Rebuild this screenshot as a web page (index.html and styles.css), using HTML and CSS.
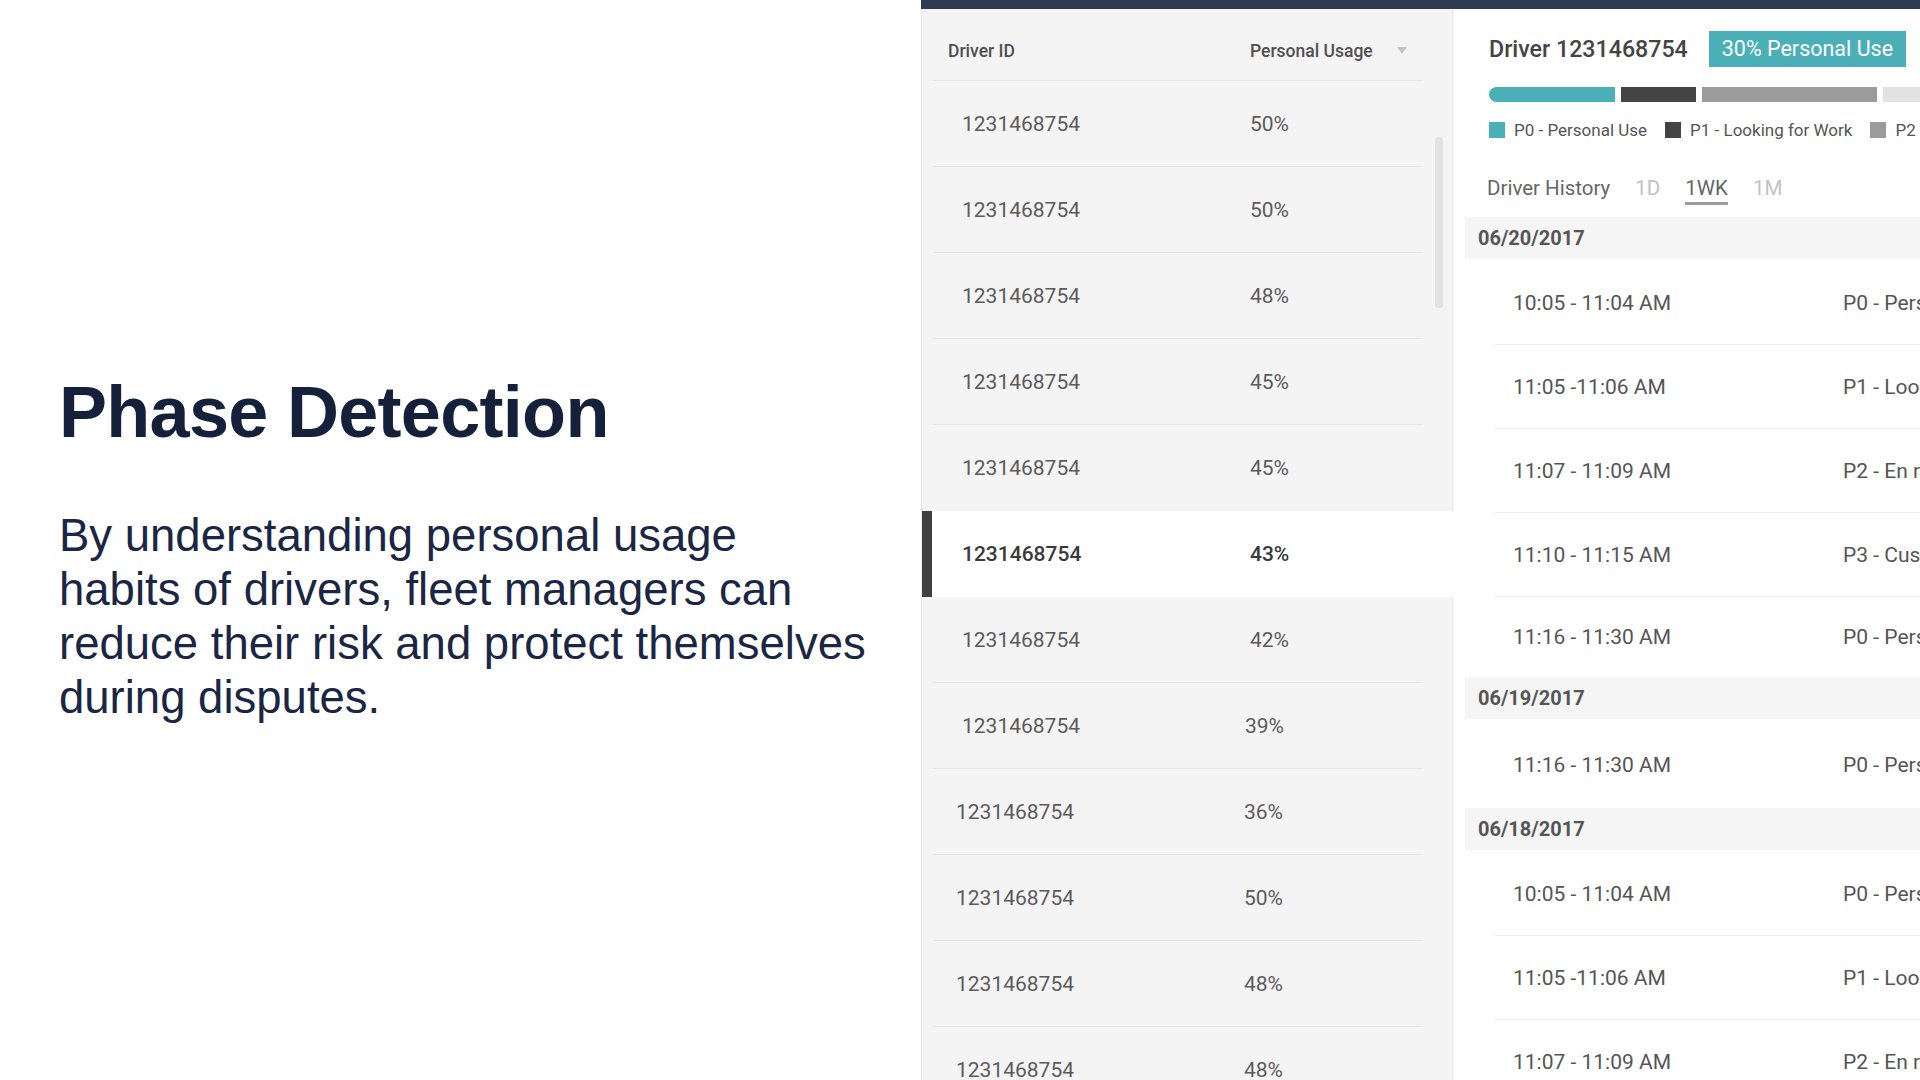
FILE: index.html
```html
<!DOCTYPE html>
<html lang="en">
<head>
<meta charset="utf-8">
<title>Phase Detection</title>
<link rel="stylesheet" href="styles.css">
</head>
<body>
<div class="page">
  <section class="intro">
    <h1 class="title">Phase Detection</h1>
    <p class="lead">By understanding personal usage<br>habits of drivers, fleet managers can<br>reduce their risk and protect themselves<br>during disputes.</p>
  </section>
  <section class="dash">
    <div class="topbar"></div>
    <div class="dash-body">
      <div class="list">
        <div class="list-head">
          <div class="list-head-in">
            <span class="head-id">Driver ID</span>
            <span class="head-pct">Personal Usage</span>
            <svg class="sort" width="10" height="7" viewBox="0 0 10 7"><path d="M0 0 L10 0 L5 7 Z" fill="#c4c4c4"/></svg>
          </div>
        </div>
        <div class="row"><div class="row-in"><span class="cell-id">1231468754</span><span class="cell-pct">50%</span></div></div>
        <div class="row"><div class="row-in"><span class="cell-id">1231468754</span><span class="cell-pct">50%</span></div></div>
        <div class="row"><div class="row-in"><span class="cell-id">1231468754</span><span class="cell-pct">48%</span></div></div>
        <div class="row"><div class="row-in"><span class="cell-id">1231468754</span><span class="cell-pct">45%</span></div></div>
        <div class="row"><div class="row-in noline"><span class="cell-id">1231468754</span><span class="cell-pct">45%</span></div></div>
        <div class="row sel"><div class="row-in noline"><span class="cell-id">1231468754</span><span class="cell-pct">43%</span></div></div>
        <div class="row"><div class="row-in"><span class="cell-id">1231468754</span><span class="cell-pct">42%</span></div></div>
        <div class="row"><div class="row-in"><span class="cell-id">1231468754</span><span class="cell-pct nudge">39%</span></div></div>
        <div class="row"><div class="row-in lp"><span class="cell-id">1231468754</span><span class="cell-pct">36%</span></div></div>
        <div class="row"><div class="row-in lp"><span class="cell-id">1231468754</span><span class="cell-pct">50%</span></div></div>
        <div class="row"><div class="row-in lp"><span class="cell-id">1231468754</span><span class="cell-pct">48%</span></div></div>
        <div class="row"><div class="row-in lp"><span class="cell-id">1231468754</span><span class="cell-pct">48%</span></div></div>
        <div class="scrollbar"></div>
      </div>
      <div class="detail">
        <div class="d-head">
          <span class="d-name">Driver 1231468754</span>
          <span class="badge">30% Personal Use</span>
        </div>
        <div class="bar">
          <span class="seg seg-p0"></span>
          <span class="seg seg-p1"></span>
          <span class="seg seg-p2"></span>
          <span class="seg seg-p3"></span>
        </div>
        <div class="legend">
          <span class="lg-item"><span class="sw sw-p0"></span>P0 - Personal Use</span>
          <span class="lg-item"><span class="sw sw-p1"></span>P1 - Looking for Work</span>
          <span class="lg-item"><span class="sw sw-p2"></span>P2 - En route</span>
        </div>
        <div class="tabs">
          <span class="tab label">Driver History</span>
          <span class="tab">1D</span>
          <span class="tab on">1WK</span>
          <span class="tab">1M</span>
        </div>
        <div class="date first">06/20/2017</div>
        <div class="entry"><span class="e-time">10:05 - 11:04 AM</span><span class="e-phase">P0 - Personal Use</span></div>
        <div class="entry"><span class="e-time">11:05 -11:06 AM</span><span class="e-phase">P1 - Looking for Work</span></div>
        <div class="entry"><span class="e-time">11:07 - 11:09 AM</span><span class="e-phase">P2 - En route</span></div>
        <div class="entry"><span class="e-time">11:10 - 11:15 AM</span><span class="e-phase">P3 - Customer Pickup</span></div>
        <div class="entry last short"><span class="e-time">11:16 - 11:30 AM</span><span class="e-phase">P0 - Personal Use</span></div>
        <div class="date">06/19/2017</div>
        <div class="entry last tall"><span class="e-time">11:16 - 11:30 AM</span><span class="e-phase">P0 - Personal Use</span></div>
        <div class="date">06/18/2017</div>
        <div class="entry"><span class="e-time">10:05 - 11:04 AM</span><span class="e-phase">P0 - Personal Use</span></div>
        <div class="entry"><span class="e-time">11:05 -11:06 AM</span><span class="e-phase">P1 - Looking for Work</span></div>
        <div class="entry"><span class="e-time">11:07 - 11:09 AM</span><span class="e-phase">P2 - En route</span></div>
      </div>
    </div>
  </section>
</div>
</body>
</html>
```

FILE: styles.css
```css
html, body {
  margin: 0;
  padding: 0;
}
body {
  width: 1920px;
  height: 1080px;
  overflow: hidden;
  background: #ffffff;
}
.page {
  display: flex;
  height: 1080px;
}

/* Left intro */
.intro {
  width: 921px;
  flex: none;
  box-sizing: border-box;
  padding: 376px 0 0 59px;
  font-family: "Liberation Sans", Arial, sans-serif;
  color: #15203b;
}
.title {
  margin: 0;
  font-size: 72px;
  line-height: 72px;
  font-weight: 700;
  letter-spacing: -0.7px;
}
.lead {
  margin: 61px 0 0;
  font-size: 45.5px;
  line-height: 54px;
  color: #1b2644;
}

/* Dashboard */
.dash {
  flex: 1;
  min-width: 0;
  display: flex;
  flex-direction: column;
  overflow: hidden;
  font-family: Roboto, "Liberation Sans", sans-serif;
}
.topbar {
  flex: none;
  height: 9px;
  background: #2f3b4e;
}
.dash-body {
  flex: 1;
  min-height: 0;
  display: flex;
}

/* List column */
.list {
  position: relative;
  flex: none;
  width: 530px;
  background: #f5f4f5;
  border-left: 1px solid #e6e5e6;
  border-right: 1px solid #e8e7e8;
}
.list-head {
  height: 72px;
}
.list-head-in {
  box-sizing: border-box;
  height: 72px;
  margin: 0 29px 0 11px;
  padding: 12px 0 0 15px;
  border-bottom: 1px solid #e6e5e6;
  display: flex;
  align-items: center;
  font-size: 17.5px;
  font-weight: 500;
  color: #4f4f4f;
}
.head-id {
  width: 302px;
}
.sort {
  margin-left: 24px;
}
.row {
  height: 86px;
}
.row-in {
  box-sizing: border-box;
  height: 86px;
  margin: 0 29px 0 11px;
  padding-left: 29px;
  border-bottom: 1px solid #e6e5e6;
  display: flex;
  align-items: center;
  font-size: 21px;
  color: #5b5b5b;
}
.row-in.noline {
  border-bottom-color: transparent;
}
.row-in.lp {
  padding-left: 23px;
}
.cell-id {
  width: 288px;
}
.cell-pct.nudge {
  margin-left: -5px;
}
.row.sel {
  position: relative;
  margin-right: -1px;
  background: #ffffff;
  box-shadow: inset 10px 0 0 #3f3f3f;
}
.row.sel .row-in {
  color: #3a3a3a;
  font-weight: 500;
}
.scrollbar {
  position: absolute;
  left: 513px;
  top: 128px;
  width: 8px;
  height: 171px;
  border-radius: 4px;
  background: #e3e2e3;
}

/* Detail column */
.detail {
  flex: none;
  width: 467px;
  background: #ffffff;
  overflow: hidden;
  white-space: nowrap;
}
.d-head {
  display: flex;
  align-items: center;
  height: 36px;
  margin: 22px 0 0 36px;
}
.d-name {
  font-size: 23.2px;
  font-weight: 500;
  color: #444444;
}
.badge {
  margin-left: 21px;
  height: 36px;
  line-height: 36px;
  padding: 0 13px;
  background: #4bafb8;
  color: #ffffff;
  font-size: 21.5px;
}
.bar {
  display: flex;
  gap: 6px;
  height: 15px;
  margin: 20px 0 0 36px;
}
.seg {
  flex: none;
  height: 15px;
}
.seg-p0 {
  width: 126px;
  background: #4bafb8;
  border-radius: 8px 0 0 8px;
}
.seg-p1 {
  width: 75px;
  background: #444444;
}
.seg-p2 {
  width: 175px;
  background: #9b9b9b;
}
.seg-p3 {
  width: 120px;
  background: #e2e2e2;
}
.legend {
  display: flex;
  align-items: center;
  height: 20px;
  margin: 18px 0 0 36px;
  font-size: 17px;
  color: #555555;
}
.lg-item {
  display: flex;
  align-items: center;
  gap: 9px;
  margin-right: 18px;
}
.sw {
  width: 16px;
  height: 16px;
}
.sw-p0 { background: #4bafb8; }
.sw-p1 { background: #444444; }
.sw-p2 { background: #9b9b9b; }
.tabs {
  display: flex;
  align-items: flex-start;
  height: 29px;
  margin: 36px 0 0 34px;
  font-size: 20.5px;
  line-height: 24px;
}
.tab {
  margin-right: 25px;
  color: #c2c2c2;
}
.tab.label {
  color: #666666;
}
.tab.on {
  color: #666666;
  padding-bottom: 2px;
  border-bottom: 3px solid #9c9c9c;
}
.date {
  display: flex;
  align-items: center;
  height: 42px;
  margin-left: 12px;
  padding-left: 13px;
  background: #f5f5f5;
  font-size: 20px;
  font-weight: 700;
  color: #555555;
}
.date.first {
  margin-top: 12px;
}
.entry {
  box-sizing: border-box;
  display: flex;
  align-items: center;
  height: 84px;
  margin-left: 42px;
  padding-left: 18px;
  border-bottom: 1px solid #ececec;
  font-size: 21px;
  color: #555555;
}
.date + .entry {
  height: 86px;
  padding-top: 3px;
}
.entry.last {
  border-bottom-color: transparent;
}
.entry.short {
  height: 80px;
}
.entry.tall {
  height: 89px;
}
.e-time {
  flex: none;
  width: 330px;
}
```
